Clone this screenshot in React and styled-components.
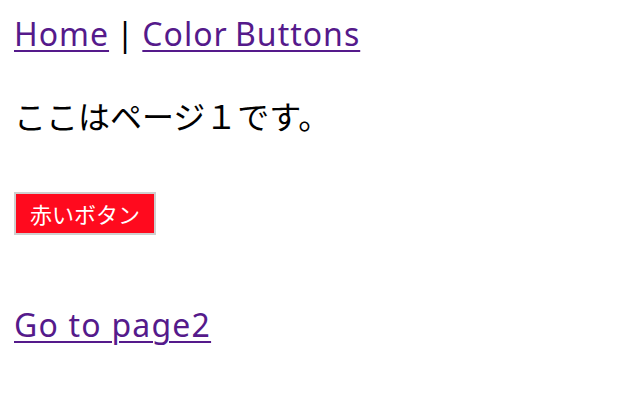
import React from 'react'
import styled, { createGlobalStyle } from 'styled-components'

const GlobalStyle = createGlobalStyle`
  body {
    margin: 0;
    background: #fff;
    font-family: "Noto Sans", "Noto Sans CJK JP", sans-serif;
  }
`

const Page = styled.div`
  padding: 12px 14px 0;
  color: #000;
`

const Nav = styled.nav`
  font-size: 32px;
  line-height: 44px;
  letter-spacing: 1px;
  word-spacing: -2px;
`

const NavLink = styled.a`
  color: #551a8b;
  text-decoration: underline;
  text-decoration-thickness: 2px;
  text-underline-offset: 4px;
`

const Message = styled.p`
  font-family: "Noto Sans CJK JP", sans-serif;
  font-size: 32px;
  line-height: 40px;
  margin: 39px 0 0;
`

const RedButton = styled.button`
  display: block;
  margin-top: 57px;
  width: 142px;
  height: 43px;
  padding: 0 0 1px;
  background: #ff0a1e;
  color: #fff;
  border: 2px solid #cfcfcf;
  font-family: "Noto Sans CJK JP", sans-serif;
  font-size: 22px;
`

const PageLink = styled(NavLink)`
  display: inline-block;
  margin-top: 68px;
  font-size: 32px;
  line-height: 44px;
  letter-spacing: 1.2px;
`

export default function App() {
  return (
    <>
      <GlobalStyle />
      <Page>
        <Nav>
          <NavLink href="#">Home</NavLink> | <NavLink href="#">Color Buttons</NavLink>
        </Nav>
        <Message>ここはページ１です。</Message>
        <RedButton>赤いボタン</RedButton>
        <PageLink href="#">Go to page2</PageLink>
      </Page>
    </>
  )
}
